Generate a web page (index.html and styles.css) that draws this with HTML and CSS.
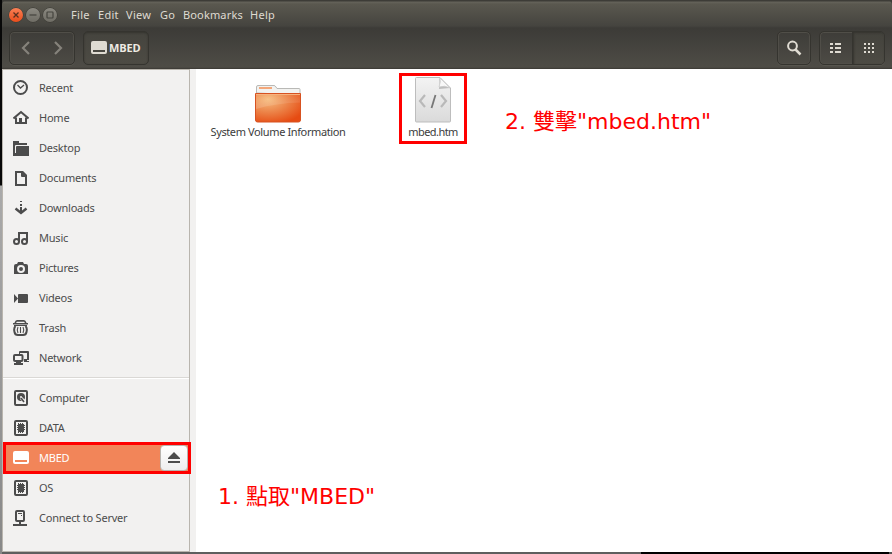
FILE: index.html
```html
<!DOCTYPE html>
<html lang="zh-Hant">
<head>
<meta charset="utf-8">
<title>MBED</title>
<link rel="stylesheet" href="styles.css">
</head>
<body>
<div class="desktop">
<div class="backdrop"></div>
<main class="window">
<header class="menubar">
  <div class="controls">
    <span class="control close"><svg width="14" height="14" viewBox="0 0 14 14"><path d="M4.500 4.500l5 5M9.500 4.500l-5 5" stroke="#59301f" stroke-width="1.300"/></svg></span>
    <span class="control"><svg width="14" height="14" viewBox="0 0 14 14"><path d="M3.500 7h7" stroke="#45443e" stroke-width="1.200"/></svg></span>
    <span class="control"><svg width="14" height="14" viewBox="0 0 14 14"><rect x="4" y="4" width="6" height="6" rx=".7" fill="none" stroke="#45443e" stroke-width="1.200"/></svg></span>
  </div>
  <nav class="menu"><span class="m-file">File</span><span class="m-edit">Edit</span><span class="m-view">View</span><span class="m-go">Go</span><span class="m-book">Bookmarks</span><span class="m-help">Help</span></nav>
</header>
<div class="toolbar">
  <div class="button navigation">
    <svg width="16" height="16" viewBox="0 0 16 16"><path d="M11 2L5 8l6 6" fill="none" stroke="#85827b" stroke-width="2.200"/></svg>
    <svg width="16" height="16" viewBox="0 0 16 16"><path d="M5 2l6 6-6 6" fill="none" stroke="#85827b" stroke-width="2.200"/></svg>
  </div>
  <div class="button location active">
    <svg width="16" height="16" viewBox="0 0 16 16"><path fill="#dfdbd2" fill-rule="evenodd" d="M2 1h12q2 0 2 2v9q0 2-2 2H2q-2 0-2-2V3q0-2 2-2zM2 10v2h12v-2z"/></svg><span>MBED</span>
  </div>
  <div class="spacer"></div>
  <div class="button search"><svg width="16" height="16" viewBox="0 0 16 16"><circle cx="6.500" cy="6" r="4.400" fill="none" stroke="#dfdbd2" stroke-width="2"/><path d="M9.500 9.500l5 5" stroke="#dfdbd2" stroke-width="2.500"/></svg></div>
  <div class="button views">
    <div class="view list"><svg width="16" height="16" viewBox="0 0 16 16"><path fill="#dfdbd2" d="M3 3h3v2H3zM8 3h6v2H8zM3 7h3v2H3zM8 7h6v2H8zM3 11h3v2H3zM8 11h6v2H8z"/></svg></div>
    <div class="view active"><svg width="16" height="16" viewBox="0 0 16 16"><path fill="#dfdbd2" d="M3 3h2v2H3zM7 3h2v2H7zM11 3h2v2h-2zM3 7h2v2H3zM7 7h2v2H7zM11 7h2v2h-2zM3 11h2v2H3zM7 11h2v2H7zM11 11h2v2h-2z"/></svg></div>
  </div>
</div>
<div class="body">
<aside class="sidebar">
  <div class="place"><svg class="icon" viewBox="0 0 16 16"><circle cx="7.500" cy="7.500" r="6.500" fill="none" stroke="#4c4c4c" stroke-width="2"/><path d="M4.500 5l3 3 3.500-3" fill="none" stroke="#4c4c4c" stroke-width="1.300"/></svg><span>Recent</span></div>
  <div class="place"><svg class="icon" viewBox="0 0 16 16"><path d="M.5 8.500L8 2l7.500 6.500" fill="none" stroke="#4c4c4c" stroke-width="2"/><path d="M3 7.500v5.500h10V7.500" fill="none" stroke="#4c4c4c" stroke-width="2"/><path d="M6 8h3v5H6z" fill="#4c4c4c"/></svg><span>Home</span></div>
  <div class="place"><svg class="icon" viewBox="0 0 16 16"><path fill="#4c4c4c" d="M0 1h6v2h8v2H3q-1 0-1 1v8H0zM4 6h12v10H3V7q0-1 1-1zM0 13h4v3H0z"/></svg><span>Desktop</span></div>
  <div class="place"><svg class="icon" viewBox="0 0 16 16"><path fill="none" stroke="#4c4c4c" stroke-width="2" d="M3 2h6l4 4v9H3z"/><path fill="#4c4c4c" d="M8 1h2l4 4v2H9q-1 0-1-1z"/></svg><span>Documents</span></div>
  <div class="place"><svg class="icon" viewBox="0 0 16 16"><path fill="#4c4c4c" d="M7 1h2v1H7zM7 4h2v2H7zM7 7h2v5H7z"/><path d="M2.500 8.500L8 13l5.500-4.500" fill="none" stroke="#4c4c4c" stroke-width="2.400"/></svg><span>Downloads</span></div>
  <div class="place"><svg class="icon" viewBox="0 0 16 16"><g fill="none" stroke="#4c4c4c" stroke-width="2"><circle cx="3.500" cy="11.500" r="2.500"/><circle cx="11.500" cy="11.500" r="2.500"/><path d="M6 12V3h8v9"/></g></svg><span>Music</span></div>
  <div class="place"><svg class="icon" viewBox="0 0 16 16"><path fill="#4c4c4c" d="M5 2h5l1 2h2q2 0 2 2v8H1V6q0-2 2-2h1z"/><circle cx="8" cy="9" r="3" fill="#4c4c4c" stroke="#f2f1f0" stroke-width="2"/></svg><span>Pictures</span></div>
  <div class="place"><svg class="icon" viewBox="0 0 16 16"><path fill="#4c4c4c" d="M1 4l4 4.500-4 4.500zM6 4h8q1 0 1 1v7q0 1-1 1H5V5q0-1 1-1z"/></svg><span>Videos</span></div>
  <div class="place"><svg class="icon" viewBox="0 0 16 16"><g fill="none" stroke="#4c4c4c"><path stroke-width="1.600" d="M2 3.500q1-2.600 2-2.600h7q1 0 2 2.600M0 3.800h15"/><path stroke-width="2" d="M2.500 6q-2 2-1 6 .5 3 3.500 3h5q3 0 3.500-3 1-4-1-6"/><path stroke-width="1.100" d="M5 7q-1.500 3 0 6M7.500 7v6M10 7q1.500 3 0 6"/></g><path fill="#4c4c4c" d="M1 5h13v1H1z"/></svg><span>Trash</span></div>
  <div class="place"><svg class="icon" viewBox="0 0 16 16"><path fill="#4c4c4c" d="M7 1h8q1 0 1 1v8h-2v1h2v1h-5V9h3V3H7v1H6V2q0-1 1-1z"/><rect x="1" y="5" width="8.500" height="6" rx="1" fill="#f2f1f0" stroke="#4c4c4c" stroke-width="2"/><path fill="#4c4c4c" d="M3 11h5v2h2v2H1v-2h2z"/></svg><span>Network</span></div>
  <hr>
  <div class="place"><svg class="icon" viewBox="0 0 16 16"><rect x="2" y="1" width="12" height="14" rx="1" fill="none" stroke="#4c4c4c" stroke-width="2"/><circle cx="8" cy="7" r="4" fill="#4c4c4c"/><path d="M8 8l4 4" stroke="#f2f1f0" stroke-width="3"/><path d="M8 8l3 4" stroke="#4c4c4c" stroke-width="1.500"/><circle cx="8" cy="7" r="1" fill="#f2f1f0"/></svg><span>Computer</span></div>
  <div class="place"><svg class="icon" viewBox="0 0 16 16"><rect x="2" y="1" width="12" height="14" rx="1" fill="none" stroke="#4c4c4c" stroke-width="2"/><path fill="#4c4c4c" d="M5 4h6v8H5z"/><path d="M4 5.500h8M4 7.500h8M4 9.500h8M5.500 3v10M7.500 3v10M9.500 3v10" stroke="#4c4c4c" stroke-width="1"/></svg><span>DATA</span></div>
  <div class="place selected"><svg class="icon" viewBox="0 0 16 16"><path fill="#fff" fill-rule="evenodd" d="M2 1h12q2 0 2 2v9q0 2-2 2H2q-2 0-2-2V3q0-2 2-2zM2 10v2h12v-2z"/></svg><span>MBED</span><b class="eject"><svg width="14" height="14" viewBox="0 0 14 14"><path fill="#4c4c4c" d="M7 1l6 6v1H1V7zM1 10h12v2H1z"/></svg></b></div>
  <div class="place"><svg class="icon" viewBox="0 0 16 16"><rect x="2" y="1" width="12" height="14" rx="1" fill="none" stroke="#4c4c4c" stroke-width="2"/><path fill="#4c4c4c" d="M5 4h6v8H5z"/><path d="M4 5.500h8M4 7.500h8M4 9.500h8M5.500 3v10M7.500 3v10M9.500 3v10" stroke="#4c4c4c" stroke-width="1"/></svg><span>OS</span></div>
  <div class="place"><svg class="icon" viewBox="0 0 16 16"><rect x="3" y="1" width="8" height="10" rx="1" fill="none" stroke="#4c4c4c" stroke-width="2"/><path fill="#4c4c4c" d="M5 3h4v1H5zM8 5h1v1H8zM6 11h2v3h6v2H0v-2h6z"/></svg><span>Connect to Server</span></div>
</aside>
<section class="files">
  <div class="items">
  <div class="file folder"><svg width="48" height="46" viewBox="0 0 48 46"><defs><radialGradient id="folder-fill" cx=".28" cy=".2" r=".9"><stop stop-color="#f6bd80"/><stop offset=".5" stop-color="#ec8449"/><stop offset="1" stop-color="#e64b12"/></radialGradient><linearGradient id="folder-gloss" x2="0" y2="1"><stop stop-color="#fff" stop-opacity=".02"/><stop offset="1" stop-color="#fff" stop-opacity=".16"/></linearGradient></defs><path d="M2.500 16V10q0-1.500 1.500-1.500h16q1 0 2 1.500l1 1.500h22q1 0 1 1V18z" fill="#f2f2f0" stroke="#b9b9b6"/><rect x="5" y="10" width="13" height="2" fill="#f4a77a"/><path d="M1.500 16.500h45V43q0 2-2 2h-41q-2 0-2-2z" fill="url(#folder-fill)" stroke="#d75221"/><path d="M2 17.500h44v8Q22 26 2 32z" fill="url(#folder-gloss)"/><path d="M2 17.500h44" stroke="#f7b27f"/></svg><span>System Volume Information</span></div>
  <div class="file document"><svg width="38" height="46" viewBox="0 0 38 46"><defs><linearGradient id="paper" x2="0" y2="1"><stop stop-color="#f3f3f3"/><stop offset="1" stop-color="#dadada"/></linearGradient></defs><path d="M1.500 1.500q0-1 1-1H26L36.500 11v33q0 1-1 1h-33q-1 0-1-1z" fill="url(#paper)" stroke="#bdbdbd"/><path d="M25 1q1 3 0 11l11-1z" fill="#bdbdbd"/><path d="M26 1q1 4-1 9 6-2 11 1z" fill="#f8f8f8" stroke="#c8c8c8" stroke-width=".7"/><path d="M11 18l-5 6 5 6M27 18l5 6-5 6" fill="none" stroke="#b9b9b9" stroke-width="2.200"/><path d="M21.500 18l-4 13" stroke="#777" stroke-width="1.800"/></svg><span>mbed.htm</span></div>
  <p class="note step-two">2. 雙擊"mbed.htm"</p>
  </div>
  <p class="note step-one">1. 點取"MBED"</p>
</section>
</div>
<footer class="edge"></footer>
</main>
</div>
</body>
</html>
```

FILE: styles.css
```css
* { box-sizing: border-box; }
body { margin: 0; width: 892px; height: 554px; overflow: hidden; font-family: "Noto Sans", "Open Sans", sans-serif; font-size: 11px; color: #4c4c4c; }
svg { display: block; flex: none; }
.desktop { display: flex; width: 892px; height: 554px; background: #3d3c37; }
.backdrop { width: 2px; background: linear-gradient(#080808 0 185px, #aaa 186px, #888 100%); }
.window { width: 890px; display: flex; flex-direction: column; }
.menubar { height: 28px; padding: 1px 0 0 6.5px; display: flex; align-items: center; background: linear-gradient(#3d3c37 0 1px, #65635a 2px, #5a584f 4px, #45443f 26px, #3c3b37); border-radius: 5px 5px 0 0; }
.controls { display: flex; gap: 3px; margin-right: 14.5px; }
.control { width: 14px; height: 14px; border-radius: 50%; background: linear-gradient(#8b8981, #6f6d65); box-shadow: 0 0 0 .5px #393832; }
.close { background: linear-gradient(#fa8055, #e94d1b); }
.menu { display: flex; padding-top: 1px; color: #dfdbd2; line-height: 18px; white-space: nowrap; letter-spacing: .3px; }
.m-file { width: 27px; } .m-edit { width: 28px; } .m-view { width: 34px; } .m-go { width: 23px; } .m-book { width: 67px; letter-spacing: .15px; } .m-help { width: 28px; }
.toolbar { height: 41px; padding: 3px 7px 3px 7px; display: flex; align-items: center; background: linear-gradient(#3c3b37, #4e4c46 39px, #45433e 40px); border-bottom: 1px solid #3f3d38; }
.button { height: 34px; display: flex; align-items: center; border: 1px solid #35342f; border-radius: 5px; box-shadow: inset 0 0 0 1px #504e48, 0 1px #57554e; }
.button.active { box-shadow: inset 0 1px 2px #35342f; background: linear-gradient(#45443e, #4d4b44); }
.navigation { width: 66px; padding: 0 8px; justify-content: space-between; margin-right: 8px; }
.location { width: 66px; padding-left: 7px; gap: 2px; color: #eeeae3; font: bold 11px/18px "Open Sans", sans-serif; letter-spacing: -.1px; }
.spacer { flex: 1; }
.search { width: 34px; justify-content: center; margin-right: 8px; }
.views { width: 66px; }
.view { width: 32px; height: 32px; flex: none; display: flex; align-items: center; justify-content: center; }
.view.list { padding-right: 3px; }
.view.active { border-left: 1px solid #35342f; border-radius: 0 4px 4px 0; background: linear-gradient(#43423c, #4d4b44); box-shadow: inset 1px 1px 2px #35342f; }
.body { height: 483px; display: flex; background: #fff; }
.sidebar { width: 188px; padding: 3px 0 0; background: #f2f1f0; border: 1px solid #b9b5ae; }
.place { height: 30px; padding-left: 10px; display: flex; align-items: center; white-space: nowrap; }
.place span { margin-left: 10px; padding-bottom: 2px; letter-spacing: -.22px; }
.icon { width: 16px; height: 16px; }
hr { height: 2px; margin: 4px 0; border: 0; border-top: 1px solid #dad8d5; background: #fff; }
.selected { width: 188px; height: 32px; margin: -1px 0 -1px; padding-left: 7px; color: #fff; background: #f28559; border: 3px solid #f00; position: relative; }
.eject { width: 28px; height: 26px; margin-left: auto; padding-right: 1px; display: flex; align-items: center; justify-content: center; background: linear-gradient(#fff, #eee); border: 1px solid #b8b4af; border-radius: 4px; }
.files { flex: 1; border-left: 6px solid #f2f1f0; display: flex; flex-direction: column; justify-content: space-between; }
.items { display: flex; padding-left: 8px; padding-top: 4px; }
.file { display: flex; flex-direction: column; align-items: center; white-space: nowrap; line-height: 15px; color: #3c3c3c; }
.folder { width: 148px; padding-top: 4px; }
.folder svg { margin-bottom: 1px; }
.folder span { letter-spacing: -.38px; }
.document { width: 68px; height: 71px; margin-left: 47px; padding-top: 1px; border: 3px solid #f00; }
.document svg { margin-bottom: 1px; }
.document span { letter-spacing: -.55px; }
.note { margin: 0; color: #f00; font: 22px/28px "DejaVu Sans", "Noto Sans CJK TC", sans-serif; white-space: nowrap; }
.step-two { margin: 35px 0 0 38px; }
.step-one { margin: 0 0 41px 22px; }
.edge { height: 2px; background: linear-gradient(90deg, #5e5e5e 639px, #000 639px 887px, #555 887px); }
```
